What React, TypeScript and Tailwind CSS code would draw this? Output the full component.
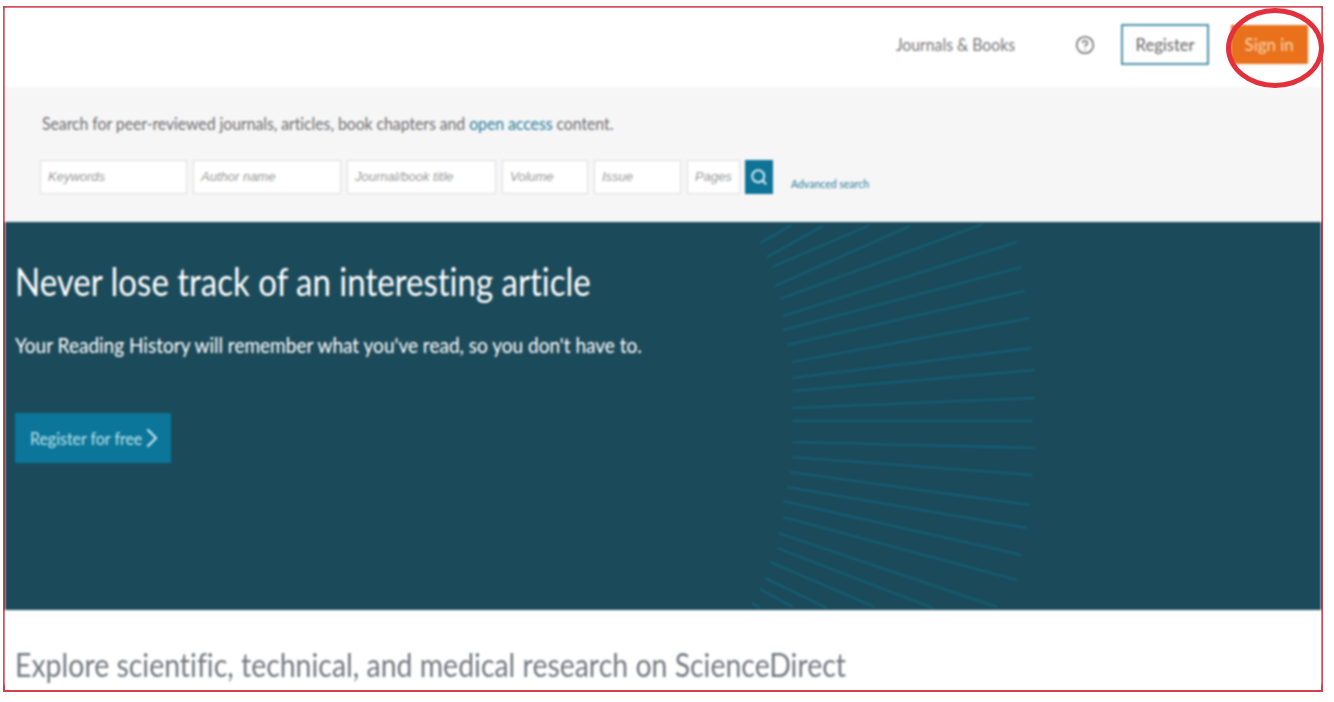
import { FC } from "react";
import { CircleHelp, ChevronRight, Search } from "lucide-react";

const fields = [
  { label: "Keywords", width: "w-[147px]" },
  { label: "Author name", width: "w-[148px]" },
  { label: "Journal/book title", width: "w-[149px]" },
  { label: "Volume", width: "w-[86px]" },
  { label: "Issue", width: "w-[87px]" },
  { label: "Pages", width: "w-[53px]" },
];

// ray coordinates in page pixels, traced from the banner artwork
const rays = [
  [760, 243, 792, 225],
  [767, 257, 823, 226],
  [772, 267, 870, 225],
  [775, 286, 910, 226],
  [780, 299, 983, 224],
  [783, 316, 1017, 242],
  [783, 330, 1022, 267],
  [787, 345, 1025, 291],
  [792, 362, 1030, 318],
  [792, 378, 1032, 348],
  [792, 391, 1035, 370],
  [792, 408, 1035, 398],
  [792, 421, 1033, 421],
  [792, 442, 1035, 448],
  [792, 457, 1033, 475],
  [790, 472, 1030, 505],
  [787, 487, 1027, 528],
  [783, 501, 1022, 555],
  [783, 517, 1017, 580],
  [778, 533, 997, 607],
  [777, 548, 933, 608],
  [770, 562, 875, 607],
  [765, 578, 827, 608],
  [760, 589, 793, 607],
  [752, 603, 760, 608],
];

const Rays: FC = () => (
  <svg viewBox="5 222 1316 388" className="absolute inset-0 h-full w-full">
    {rays.map((r, i) => (
      <line key={i} x1={r[0]} y1={r[1]} x2={r[2]} y2={r[3]} stroke="#10667c" strokeWidth="1.7" />
    ))}
  </svg>
);

const App: FC = () => {
  return (
    <div className="relative h-[702px] w-[1334px] overflow-hidden bg-white pl-[3px] pt-[6px] font-['Lato',sans-serif] [font-variant-ligatures:none]">
      <div className="h-[686px] w-[1320px] border-2 border-[#cf3f4c]">
        <div className="blur-[0.8px]">
          <header className="flex h-[79px] items-center justify-end bg-white pb-[6px] pr-[13px]">
            <a className="mr-[60px] w-[119px] whitespace-nowrap text-[18px] text-[#777]">
              <span className="inline-block origin-left scale-x-[0.875]">Journals &amp; Books</span>
            </a>
            <CircleHelp className="mr-[26px] h-[20px] w-[20px] text-[#666]" strokeWidth={1.8} />
            <button className="mr-[22px] h-[41px] w-[88px] border-2 border-[#4f93a8] text-[18px] text-[#666]">
              <span className="inline-block scale-x-[0.92]">Register</span>
            </button>
            <button className="h-[39px] w-[77px] bg-[#e9711c] text-[18px] text-[#f8d5b0]">
              <span className="inline-block scale-x-[0.94]">Sign in</span>
            </button>
          </header>

          <section className="h-[135px] bg-[#f6f6f7] pl-[37px] pt-[23px]">
            <p className="origin-left scale-x-[0.884] whitespace-nowrap text-[18px] leading-[26px] tracking-[-0.1px] text-[#6e6e6e]">
              Search for peer-reviewed journals, articles, book chapters and{" "}
              <a className="text-[#2b7f9a]">open access</a> content.
            </p>
            <div className="-ml-[2px] mt-[24px] flex items-center gap-[6px]">
              {fields.map((f) => (
                <div
                  key={f.label}
                  className={`${f.width} flex h-[34px] items-center border border-[#dedede] bg-white pl-[7px] font-['Liberation_Sans',sans-serif] text-[13px] italic text-[#9a9a9a]`}
                >
                  {f.label}
                </div>
              ))}
              <button className="-ml-[1px] flex h-[34px] w-[28px] items-center justify-center bg-[#0f7396]">
                <Search className="h-[18px] w-[18px] text-[#d5ecf3]" strokeWidth={2.6} />
              </button>
              <a className="ml-[12px] mt-[15px] text-[10.5px] text-[#2b7f9a]">Advanced search</a>
            </div>
          </section>

          <section className="relative h-[388px] bg-[#1b4a5a] pl-[10px] text-white">
            <Rays />
            <div className="relative">
              <h1 className="origin-left scale-x-[0.869] whitespace-nowrap pt-[35px] text-[38px] leading-[48px]">
                Never lose track of an interesting article
              </h1>
              <p className="mt-[26px] origin-left scale-x-[0.906] whitespace-nowrap text-[21px] leading-[28px]">
                Your Reading History will remember what you've read, so you don't have to.
              </p>
              <button className="mt-[54px] flex h-[50px] w-[156px] items-center bg-[#0b7699] pl-[15px] text-[18px] text-[#bfe3ee]">
                <span className="w-[112px] origin-left scale-x-[0.885] whitespace-nowrap text-left">Register for free</span>
                <ChevronRight className="-ml-[6px] h-[32px] w-[32px] shrink-0" strokeWidth={1.8} />
              </button>
            </div>
          </section>

          <section className="bg-white pl-[10px] pt-[33px]">
            <h2 className="origin-left scale-x-[0.862] whitespace-nowrap text-[33px] leading-[42px] text-[#737880]">
              Explore scientific, technical, and medical research on ScienceDirect
            </h2>
          </section>
        </div>
      </div>
      {/* hand-drawn red circle round the sign in button */}
      <div className="absolute left-[1226px] top-[8px] h-[80px] w-[98px] rounded-[50%] border-[5px] border-[#e2303c] blur-[0.5px]" />
    </div>
  );
};

export default App;
